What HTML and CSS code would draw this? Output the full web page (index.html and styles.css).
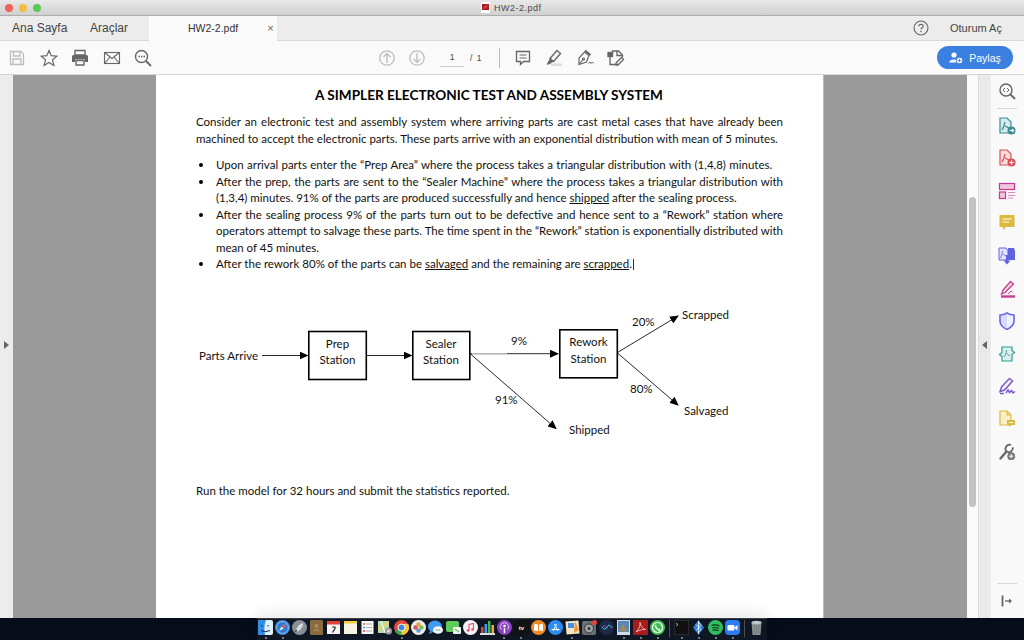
FILE: index.html
```html
<!DOCTYPE html>
<html lang="en">

<head>
    <meta charset="UTF-8">
    <meta name="viewport" content="width=device-width, initial-scale=1.0">
    <title>HW2-2.pdf</title>
    <link rel="stylesheet" href="styles.css">
</head>

<body>
    <div id="window">
        <div class="titlebar">
            <div class="lights"><i class="red"></i><i class="yellow"></i><i class="green"></i></div>
            <div class="doc-title">
                <svg width="9" height="11" viewBox="0 0 9 11"><rect width="9" height="11" fill="#fff"/><rect x="1" y="2" width="7" height="6" fill="#b01c1c"/><path d="M3 6.500 6 3.500" stroke="#f4c8c8" stroke-width=".7"/></svg>
                <span>HW2-2.pdf</span>
            </div>
        </div>

        <div class="tabbar">
            <a class="nav nav-home">Ana Sayfa</a>
            <a class="nav nav-tools">Araçlar</a>
            <div class="tab"><span class="tab-name">HW2-2.pdf</span><span class="tab-close">×</span></div>
            <svg class="help" width="16" height="16" viewBox="0 0 16 16"><circle cx="8" cy="8" r="7" fill="none" stroke="#666" stroke-width="1.100"/><path d="M5.800 6.300C5.800 3.700 10.200 3.700 10.200 6.200 10.200 7.800 8 7.800 8 9.600" fill="none" stroke="#666" stroke-width="1.100"/><circle cx="8" cy="11.500" r=".8" fill="#666"/></svg>
            <a class="signin">Oturum Aç</a>
        </div>

        <div class="toolbar">
            <div class="tools tools-left">
                <svg width="20" height="20" viewBox="0 0 20 20" fill="none" stroke="#bdbdbd" stroke-width="1.300"><path d="M3.500 3.500H14L16.500 6V16.500H3.500Z"/><path d="M6.500 3.500V8H13V3.500M6 16.500V11H14V16.500"/></svg>
                <svg width="20" height="20" viewBox="0 0 20 20" fill="none" stroke="#666" stroke-width="1.200"><path d="M10 2.500 12.200 7.700 17.800 8.200 13.500 11.900 14.900 17.400 10 14.500 5.100 17.400 6.500 11.900 2.200 8.200 7.800 7.700Z"/></svg>
                <svg width="20" height="20" viewBox="0 0 20 20"><path d="M5 2.500H15V7H5Z" fill="none" stroke="#666" stroke-width="1.400"/><path d="M3.500 7H16.500A1.500 1.500 0 0 1 18 8.500V14H15V11.500H5V14H2V8.500A1.500 1.500 0 0 1 3.500 7Z" fill="#666"/><path d="M6 12.500H14V17H6Z" fill="none" stroke="#666" stroke-width="1.400"/></svg>
                <svg width="20" height="20" viewBox="0 0 20 20" fill="none" stroke="#666" stroke-width="1.100"><rect x="2.500" y="4.500" width="15" height="11"/><path d="M2.500 4.500 10 10.500 17.500 4.500M2.500 15.500 8 9M17.500 15.500 12 9"/></svg>
                <svg width="20" height="20" viewBox="0 0 20 20" fill="none" stroke="#666" stroke-width="1.400"><circle cx="8.500" cy="8.500" r="6"/><path d="M13 13 18 18" stroke-width="1.800"/><path d="M5.500 8.500H7M8 8.500H9.500M10.500 8.500H12"/></svg>
            </div>
            <div class="tools tools-page">
                <svg width="20" height="20" viewBox="0 0 20 20" fill="none" stroke="#bcbcbc" stroke-width="1.300"><circle cx="10" cy="10" r="7.200"/><path d="M10 15V5.500M6.500 9 10 5.500 13.500 9"/></svg>
                <svg width="20" height="20" viewBox="0 0 20 20" fill="none" stroke="#bcbcbc" stroke-width="1.300"><circle cx="10" cy="10" r="7.200"/><path d="M10 5V14.500M6.500 11 10 14.500 13.500 11"/></svg>
                <span class="page-input">1</span>
                <span class="page-total">/ 1</span>
                <span class="sep"></span>
            </div>
            <div class="tools tools-comment">
                <svg width="20" height="20" viewBox="0 0 20 20" fill="none" stroke="#666" stroke-width="1.300"><path d="M3.500 3.500H16.500V13.500H10.500L7.500 16.500V13.500H3.500Z"/><path d="M6.500 7H13.500M6.500 10H13.500" stroke-width="1"/></svg>
                <svg width="20" height="20" viewBox="0 0 20 20"><path d="M13 2.500 16.500 5.500 9.500 13.500 6 10.500Z" fill="none" stroke="#666" stroke-width="1.400"/><path d="M6 10.500 2.500 16.500 5 16.500 9.500 13.500Z" fill="#666"/><rect x="7" y="15.500" width="11" height="2.500" fill="#ddd"/></svg>
                <svg width="20" height="20" viewBox="0 0 20 20" fill="none" stroke="#666" stroke-width="1.200"><path d="M9.500 4 14 7.500 11.500 14 4 16.500 4 10Z"/><path d="M4 16.500 8 11.500"/><circle cx="8.500" cy="11" r="1"/><path d="M10 2.500 15.500 7" stroke-width="2"/><path d="M13.500 15.500 15 14 16 15.500 17.500 14 18.500 15.500" stroke-width="1"/></svg>
                <svg width="20" height="20" viewBox="0 0 20 20" fill="none" stroke="#666" stroke-width="1.300"><path d="M6.500 6V3H12.500L16.500 7V9.500M4 6V16.500H12"/><rect x="2" y="4.500" width="4.500" height="4" fill="#666"/><path d="M11 3V7.500H16"/><path d="M10 15 15.500 9.500 17.500 11.500 12 17H10Z"/></svg>
            </div>
            <a class="share">
                <svg width="14" height="12" viewBox="0 0 14 12"><circle cx="5" cy="3" r="2.600" fill="#fff"/><path d="M0 10.500C.5 6.500 9.500 6.500 10 10.500Z" fill="#fff"/><circle cx="10.500" cy="8.500" r="3.300" fill="#fff" stroke="#3b7fe0"/><path d="M10.500 6.800V10.200M8.800 8.500H12.200" stroke="#3b7fe0" stroke-width=".9"/></svg>
                <span>Paylaş</span>
            </a>
        </div>

        <div class="main">
            <div class="gutter"><i class="caret caret-right"></i></div>
            <div class="viewer">
                <div class="page">
                    <h1>A SIMPLER ELECTRONIC TEST AND ASSEMBLY SYSTEM</h1>
                    <p class="intro">
                        <span class="ln fit">Consider an electronic test and assembly system where arriving parts are cast metal cases that have already been</span>
                        <span class="ln">machined to accept the electronic parts. These parts arrive with an exponential distribution with mean of 5 minutes.</span>
                    </p>
                    <ul class="steps">
                        <li><span class="ln wide">Upon arrival parts enter the “Prep Area” where the process takes a triangular distribution with (1,4,8) minutes.</span></li>
                        <li><span class="ln fit">After the prep, the parts are sent to the “Sealer Machine” where the process takes a triangular distribution with</span>
                            <span class="ln">(1,3,4) minutes. 91% of the parts are produced successfully and hence <u>shipped</u> after the sealing process.</span></li>
                        <li><span class="ln fit">After the sealing process 9% of the parts turn out to be defective and hence sent to a “Rework” station where</span>
                            <span class="ln fit">operators attempt to salvage these parts. The time spent in the “Rework” station is exponentially distributed with</span>
                            <span class="ln">mean of 45 minutes.</span></li>
                        <li><span class="ln">After the rework 80% of the parts can be <u>salvaged</u> and the remaining are <u>scrapped</u>.<b class="cursor"></b></span></li>
                    </ul>
                    <svg class="flow" width="560" height="150" viewBox="190 300 560 150">
                        <defs>
                            <marker id="head" markerWidth="9" markerHeight="8" refX="8" refY="4" orient="auto" markerUnits="userSpaceOnUse"><path d="M0 0 9 4 0 8Z" fill="#000"/></marker>
                        </defs>
                        <g fill="#fff" stroke="#000" stroke-width="1.600">
                            <rect x="308.800" y="331.500" width="57.500" height="48"/>
                            <rect x="412.800" y="331.500" width="57" height="48"/>
                            <rect x="559.800" y="329.800" width="57.500" height="48"/>
                        </g>
                        <g stroke="#111" stroke-width=".9" marker-end="url(#head)">
                            <path d="M262 355.500H307.500"/>
                            <path d="M367 355.500H411.500"/>
                            <path d="M470 353.700H558"/>
                            <path d="M470.500 354 556 428.500"/>
                            <path d="M617.500 352.500 678 316"/>
                            <path d="M617.500 353 678 405"/>
                        </g>
                        <path d="M472 353.700H507" stroke="#bbb" stroke-width="1.200"/>
                        <g class="flow-text">
                            <text x="199" y="360">Parts Arrive</text>
                            <text x="337.500" y="348" text-anchor="middle">Prep</text>
                            <text x="337.500" y="364" text-anchor="middle">Station</text>
                            <text x="441" y="348" text-anchor="middle">Sealer</text>
                            <text x="441" y="364" text-anchor="middle">Station</text>
                            <text x="588.500" y="346" text-anchor="middle">Rework</text>
                            <text x="588.500" y="363" text-anchor="middle">Station</text>
                            <text x="511" y="345">9%</text>
                            <text x="632" y="326">20%</text>
                            <text x="630" y="393">80%</text>
                            <text x="495" y="404">91%</text>
                            <text x="682" y="319">Scrapped</text>
                            <text x="684" y="415">Salvaged</text>
                            <text x="569" y="434">Shipped</text>
                        </g>
                    </svg>
                    <p class="run"><span class="ln">Run the model for 32 hours and submit the statistics reported.</span></p>
                </div>
            </div>
            <div class="scroll"><div class="thumb"></div></div>
            <div class="strip"><i class="caret caret-left"></i></div>
            <div class="sidebar">
                <svg width="18" height="18" viewBox="0 0 18 18" fill="none" stroke="#666" stroke-width="1.400"><circle cx="8" cy="8" r="6"/><path d="M12.500 12.500 17 17" stroke-width="1.800"/><path d="M7 6 5 8 7 10M9 6 11 8 9 10" stroke-width="1"/></svg>
                <span class="side-line"></span>
                <svg width="18" height="18" viewBox="0 0 18 18" fill="none" stroke="#3b8a94" stroke-width="1.200"><path d="M2 1H9L13 5V16H2Z" fill="#d5ebec"/><path d="M7 5C6 9 5.500 11 4 13M7 9 11 11"/><circle cx="13.500" cy="13.500" r="4" fill="#3b8a94" stroke="none"/><path d="M11.500 13.500H15.500M14 12 15.500 13.500 14 15" stroke="#fff"/></svg>
                <svg width="18" height="18" viewBox="0 0 18 18" fill="none" stroke="#d8505a" stroke-width="1.200"><path d="M2 1H9L13 5V16H2Z" fill="#f9dcdc"/><path d="M7 5C6 9 5.500 11 4 13M7 9 11 11"/><circle cx="13.500" cy="13.500" r="4" fill="#d8505a" stroke="none"/><path d="M11.300 13.500H15.700M13.500 11.300V15.700" stroke="#fff"/></svg>
                <svg width="18" height="18" viewBox="0 0 18 18"><rect x="1.500" y="1.500" width="15" height="6" fill="#f0c6de" stroke="#c9398f" stroke-width="1.200"/><rect x="1.500" y="10" width="6" height="6.500" fill="#f0c6de" stroke="#c9398f" stroke-width="1.200"/><path d="M10 10.500H17M10 13.500H17M10 16H15" stroke="#e089bb"/></svg>
                <svg width="18" height="18" viewBox="0 0 18 18"><path d="M1.500 1.500Q1.500 1 2 1H16Q16.500 1 16.500 2V12.500Q16.500 13 16 13H8L5 16.500V13H2Q1.500 13 1.500 12.500Z" fill="#dcb93f"/><path d="M4.500 5H13.500M4.500 8H11" stroke="#fff" stroke-width="1.200"/></svg>
                <svg width="18" height="18" viewBox="0 0 18 18"><path d="M1 1H8L10 4V13H1Z" fill="#e3e4fb" stroke="#5f63e0"/><path d="M10 1H16L17 4V13H10Z" fill="#5f63e0"/><path d="M4.500 4C4 7 3.500 9 2.500 11M4.500 7 8 9" fill="none" stroke="#5f63e0" stroke-width=".8"/><path d="M9 8V15" stroke="#5f63e0" stroke-width="2"/><path d="M5.500 13.500H12.500L9 17.500Z" fill="#5f63e0"/></svg>
                <svg width="18" height="18" viewBox="0 0 18 18" fill="none" stroke="#c63f8e" stroke-width="1.300"><path d="M12.500 1.500 15.500 4 7 12.500 3.500 14 5 10Z" fill="#f3d2e5"/><path d="M3 16.500H17" stroke-width="2.400"/><path d="M10 14 13 11 14.500 12.500" stroke-width="1"/></svg>
                <svg width="18" height="18" viewBox="0 0 18 18"><path d="M9 1C11 2.500 13.500 3 16 3V9C16 13 13 15.500 9 17.500 5 15.500 2 13 2 9V3C4.500 3 7 2.500 9 1Z" fill="#eef0fd" stroke="#6468e6" stroke-width="1.600"/><path d="M9 2V16.500C5.500 15 3 12.500 3 9V4C5.500 4 7 3.500 9 2Z" fill="#d7daf9"/></svg>
                <svg width="18" height="18" viewBox="0 0 18 18" fill="none" stroke="#2f9b96" stroke-width="1.200"><path d="M4 2H14V5.500L16.500 7.500 14 9.500V16H4V11.500L1.500 9.500 4 7.500Z" fill="#dcefee"/><path d="M8.500 5C8.300 8 7.500 10 6 12M8.800 8.500 12 11" stroke-width=".9"/></svg>
                <svg width="18" height="18" viewBox="0 0 18 18" fill="none" stroke="#8159cf" stroke-width="1.500"><path d="M11.500 1.500 14.500 4 6.500 13 2 14.500 3.500 10Z"/><path d="M2 16.500H6M8 16 10 13 11.500 15.500 13.500 13.500 15 16 17 14.500"/></svg>
                <svg width="18" height="18" viewBox="0 0 18 18"><path d="M2 1H9L13 5V15H2Z" fill="#f9efc8" stroke="#dcb93f" stroke-width="1.200"/><path d="M9 1V5H13" fill="none" stroke="#dcb93f" stroke-width="1.200"/><path d="M9 10H17V15H13L11 17V15H9Z" fill="#dcb93f"/><path d="M11 12.500H15" stroke="#fff"/></svg>
                <svg width="18" height="18" viewBox="0 0 18 18" fill="none" stroke="#666"><path d="M2.500 15.500 8.500 8.500" stroke-width="2.400" stroke-linecap="round"/><path d="M13 1.800A4.200 4.200 0 0 0 8.500 8.500 4.200 4.200 0 0 0 14.800 4.300" stroke-width="1.800"/><circle cx="13.200" cy="13.200" r="3.900" fill="#777" stroke="none"/><path d="M11 13.200H15.400M13.200 11V15.400" stroke="#fff"/></svg>
                <svg class="collapse-btn" width="16" height="16" viewBox="0 0 16 16"><path d="M3.500 2.500V13.500" stroke="#666" stroke-width="1.800" fill="none"/><path d="M6 8H11" stroke="#666" stroke-width="1.300"/><path d="M10 5.500 13 8 10 10.500Z" fill="#666"/></svg>
                <span class="side-line side-line-low"></span>
            </div>
        </div>
    </div>

    <div class="desktop">
        <div class="dock">
            <span class="app on"><svg viewBox="0 0 15 15"><rect width="15" height="15" rx="2" fill="#dff0fb"/><path d="M0 2Q0 0 2 0H8C6 5 6 10 7 15H2Q0 15 0 13Z" fill="#2f8fe8"/><path d="M4 5V6.500M10 5V6.500M3 10.500Q7 13 12 10.500" stroke="#123" fill="none"/></svg></span>
            <span class="app on"><svg viewBox="0 0 15 15"><circle cx="7.500" cy="7.500" r="7.500" fill="#3b8fe4"/><circle cx="7.500" cy="7.500" r="5.800" fill="#2d7ad0" stroke="#cfe4f7" stroke-width=".5"/><path d="M11 4 6.500 6.500 4 11 8.500 8.500Z" fill="#f2f2f2"/><path d="M11 4 6.500 6.500 8.500 8.500Z" fill="#e8413a"/></svg></span>
            <span class="app"><svg viewBox="0 0 15 15"><circle cx="7.500" cy="7.500" r="7.500" fill="#8a8f96"/><path d="M11 3C7 4 5 7 4 10L5.500 11.500C8.500 10 11 8 11 3Z" fill="#d8dadd"/><path d="M3 12 5 10" stroke="#333"/></svg></span>
            <span class="app"><svg viewBox="0 0 15 15"><rect x="1" width="13" height="15" rx="1" fill="#8a6a3f"/><circle cx="7.500" cy="6" r="2" fill="#a88a5e"/><path d="M4 11Q7.500 7.500 11 11Z" fill="#a88a5e"/></svg></span>
            <span class="app"><svg viewBox="0 0 15 15"><rect x="1" y="1" width="13" height="13" fill="#f4f4f4"/><rect x="1" y="1" width="13" height="3.500" fill="#e0413a"/><path d="M6 7H9V8.500L6.500 12.500" fill="none" stroke="#222" stroke-width="1.200"/></svg></span>
            <span class="app"><svg viewBox="0 0 15 15"><rect x="1" y="1" width="13" height="13" fill="#f6f3e2"/><rect x="1" y="1" width="13" height="2.500" fill="#f0cf43"/></svg></span>
            <span class="app"><svg viewBox="0 0 15 15"><rect x="1.500" y="1" width="12" height="13" fill="#f8f8f8"/><circle cx="4" cy="4" r="1" fill="#e8623a"/><circle cx="4" cy="7.500" r="1" fill="#3b8fe4"/><circle cx="4" cy="11" r="1" fill="#e8413a"/><path d="M6 4H12M6 7.500H12M6 11H12" stroke="#999" stroke-width=".8"/></svg></span>
            <span class="app"><svg viewBox="0 0 15 15"><rect x="1" y="1" width="11" height="12" fill="#bcd9a6"/><path d="M1 9 12 2" stroke="#f2cf5c" stroke-width="1.500"/><path d="M4 1 8 13" stroke="#fff"/><circle cx="11.500" cy="11" r="3.500" fill="#9a9a9a"/><circle cx="11.500" cy="11" r="1.600" fill="#ddd"/></svg></span>
            <span class="app on"><svg viewBox="0 0 15 15"><circle cx="7.500" cy="7.500" r="7.500" fill="#e5453a"/><path d="M7.500 7.500 1 11.200A7.500 7.500 0 0 0 7.500 15L11 8.500Z" fill="#3aa757"/><path d="M7.500 4H14.200A7.500 7.500 0 0 1 7.500 15Z" fill="#f7c62f"/><circle cx="7.500" cy="7.500" r="3.500" fill="#3f83e8" stroke="#fff"/></svg></span>
            <span class="app"><svg viewBox="0 0 15 15"><circle cx="7.500" cy="7.500" r="7.500" fill="#ececec"/><circle cx="7.500" cy="4.500" r="2.200" fill="#e8a33a"/><circle cx="10.500" cy="7.500" r="2.200" fill="#7fbf4a"/><circle cx="7.500" cy="10.500" r="2.200" fill="#5a9ae0"/><circle cx="4.500" cy="7.500" r="2.200" fill="#d9534f"/></svg></span>
            <span class="app"><svg viewBox="0 0 15 15"><ellipse cx="7" cy="6.500" rx="7" ry="6" fill="#3f9cf0"/><path d="M2 11 1 14 5 12Z" fill="#3f9cf0"/><ellipse cx="10" cy="10" rx="5" ry="3.800" fill="#f4f6f8"/><path d="M8 10H8.800M9.700 10H10.500M11.400 10H12.200" stroke="#444"/></svg></span>
            <span class="app"><svg viewBox="0 0 15 15"><rect x="0" y="1" width="13" height="11" rx="2" fill="#5ecb5a"/><rect x="7" y="7" width="8" height="7" rx="1" fill="#f2f2f2"/><path d="M9 9 13 12" stroke="#5ecb5a" stroke-width="1.200"/></svg></span>
            <span class="app"><svg viewBox="0 0 15 15"><circle cx="7.500" cy="7.500" r="7.500" fill="#f4f4f6"/><path d="M6 10.500V4.500L10.500 3.500V9.500" fill="none" stroke="#ef4a68" stroke-width="1.100"/><circle cx="5" cy="10.500" r="1.300" fill="#ef4a68"/><circle cx="9.500" cy="9.500" r="1.300" fill="#ef4a68"/></svg></span>
            <span class="app"><svg viewBox="0 0 15 15"><rect y="13" width="15" height="2" fill="#ddd"/><rect x="1" y="7" width="2.500" height="6" fill="#e8413a"/><rect x="4.500" y="4" width="2.500" height="9" fill="#3f9cf0"/><rect x="8" y="1" width="2.500" height="12" fill="#4caf50"/><rect x="11.500" y="5" width="2.500" height="8" fill="#f0a830"/></svg></span>
            <span class="app on"><svg viewBox="0 0 15 15"><circle cx="7.500" cy="7.500" r="7.500" fill="#8f3fc4"/><circle cx="7.500" cy="6" r="1.300" fill="#fff"/><path d="M7.500 8V13" stroke="#fff" stroke-width="1.500"/><path d="M4.300 9.500A4.200 4.200 0 1 1 10.700 9.500" fill="none" stroke="#e6cff5"/></svg></span>
            <span class="app on"><svg viewBox="0 0 15 15"><rect width="15" height="15" rx="3" fill="#111"/><text x="7.500" y="9.800" class="tv-label" text-anchor="middle">tv</text></svg></span>
            <span class="app"><svg viewBox="0 0 15 15"><circle cx="7.500" cy="7.500" r="7.500" fill="#f08a24"/><path d="M3 4.500Q5.500 3.500 7 5V11.500Q5.500 10 3 11ZM12 4.500Q9.500 3.500 8 5V11.500Q9.500 10 12 11Z" fill="#fff"/></svg></span>
            <span class="app"><svg viewBox="0 0 15 15"><circle cx="7.500" cy="7.500" r="7.500" fill="#2c8df0"/><path d="M5 11 8.500 4M10 11 6.500 4M3.500 9.500H11.500" stroke="#fff" fill="none"/></svg></span>
            <span class="app on"><svg viewBox="0 0 15 15"><rect x="1" y="1" width="13" height="13" fill="#f3e6c8" transform="rotate(-5 7.500 7.500)"/><rect x="3" y="3" width="6" height="5" fill="#4a8fd8"/><path d="M10 1 14 10 9 13" fill="#f09a3a"/></svg></span>
            <span class="app"><svg viewBox="0 0 15 15"><rect width="14" height="14" y="1" rx="2" fill="#6b6f73"/><circle cx="7" cy="8.500" r="4.500" fill="#a0a4a8" stroke="#333"/><circle cx="7" cy="8.500" r="1.500" fill="#333"/><circle cx="12.500" cy="2.500" r="2.500" fill="#e8413a"/></svg></span>
            <span class="app"><svg viewBox="0 0 15 15"><circle cx="7.500" cy="7.500" r="7.500" fill="#1c2a4a"/><path d="M2 8Q5 3 7.500 7.500T13 7Q10 12 7.500 8T2 8Z" fill="#d94ab8"/><path d="M3 7Q6 11 8 7T13 8" stroke="#4ad0e8" fill="none"/></svg></span>
            <span class="app on"><svg viewBox="0 0 15 15"><rect x="1" width="13" height="15" fill="#cfdcea"/><rect x="2" y="1" width="11" height="11" fill="#5f87b4"/><path d="M3 11 7 4 11 11Z" fill="#a38a5c"/></svg></span>
            <span class="app on"><svg viewBox="0 0 15 15"><rect width="15" height="15" fill="#a81c1c"/><path d="M3 12C6 9 7.500 6 7 2.500 7.500 6 9.500 8.500 12.500 9.500 9 9.500 6 10 3 12Z" fill="none" stroke="#f4d6d6" stroke-width=".8"/></svg></span>
            <span class="app on"><svg viewBox="0 0 15 15"><circle cx="7.500" cy="7.500" r="7.500" fill="#3ec14e"/><circle cx="7.500" cy="7.500" r="5" fill="none" stroke="#fff" stroke-width="1.200"/><path d="M5.500 5C5.500 8 7 9.500 10 10" stroke="#fff" stroke-width="1.400" fill="none"/></svg></span>
            <span class="dock-sep"></span>
            <span class="app on"><svg viewBox="0 0 15 15"><rect width="15" height="15" rx="1" fill="#111" stroke="#666" stroke-width=".6"/><path d="M2 3 4 4.500 2 6" stroke="#ddd" fill="none" stroke-width=".7"/></svg></span>
            <span class="app on"><svg viewBox="0 0 15 15"><path d="M7.500 0 13 7.500 7.500 15 2 7.500Z" fill="#2e7fd8"/><path d="M7.500 1V14M5 4.500 10 9.500 7.500 12M5 10.500 10 5.500 7.500 2" stroke="#fff" fill="none" stroke-width=".8"/></svg></span>
            <span class="app on"><svg viewBox="0 0 15 15"><circle cx="7.500" cy="7.500" r="7.500" fill="#2fbf5f"/><path d="M3.500 5.500Q7.500 4 11.500 6M4 8Q7.500 6.800 11 8.500M4.500 10.300Q7.500 9.300 10.500 10.800" stroke="#14301d" fill="none" stroke-width="1.100"/></svg></span>
            <span class="app on"><svg viewBox="0 0 15 15"><rect width="15" height="15" rx="4" fill="#2d7cf0"/><rect x="2.500" y="5" width="7" height="5.500" rx="1.200" fill="#fff"/><path d="M10 7 12.500 5V10.500L10 8.500Z" fill="#fff"/></svg></span>
            <span class="dock-sep"></span>
            <span class="app"><svg viewBox="0 0 15 15"><path d="M2.500 2H12.500L11.500 15H3.500Z" fill="#8c9094"/><ellipse cx="7.500" cy="2.500" rx="5" ry="1.800" fill="#c4c7ca"/><path d="M5 5 5.500 14M7.500 5V14M10 5 9.500 14" stroke="#6a6e72" stroke-width=".6"/></svg></span>
        </div>
    </div>
</body>

</html>
```

FILE: styles.css
```css
* {
    margin: 0;
    padding: 0;
    box-sizing: border-box;
}

body {
    width: 1024px;
    height: 640px;
    overflow: hidden;
    background: #060d18;
    font-family: "Liberation Sans", Arial, sans-serif;
}

#window {
    height: 618px;
    display: flex;
    flex-direction: column;
    background: #ececec;
}

/* title bar */
.titlebar {
    height: 16px;
    flex: none;
    display: flex;
    align-items: center;
    background: linear-gradient(#e8e8e8, #d0d0d0);
    border-bottom: 1px solid #adadad;
}

.lights {
    width: 481px;
    padding-left: 5px;
    display: flex;
    gap: 6px;
}

.lights i {
    width: 8px;
    height: 8px;
    border-radius: 50%;
}

.red { background: #f4605a; }
.yellow { background: #f5bd3f; }
.green { background: #5bc84f; }

.doc-title {
    display: flex;
    align-items: center;
    gap: 4px;
    font-size: 9px;
    letter-spacing: .5px;
    color: #4a4a4a;
}

/* tabs */
.tabbar {
    height: 25px;
    flex: none;
    display: flex;
    align-items: center;
    background: #ececec;
    border-bottom: 1px solid #d8d8d8;
    color: #444;
    font-size: 12px;
}

.nav-home { margin-left: 12px; width: 78px; }
.nav-tools { width: 59px; }

.tab {
    width: 128px;
    height: 25px;
    display: flex;
    align-items: center;
    background: #fafafa;
    font-size: 10.500px;
    color: #333;
}

.tab-name { margin-left: 39px; }
.tab-close { margin-left: 29px; font-size: 11px; color: #666; }

.help { margin-left: 636px; }
.signin { margin-left: 21px; font-size: 11px; }

/* toolbar */
.toolbar {
    height: 34px;
    flex: none;
    display: flex;
    align-items: center;
    background: #fafafa;
    border-bottom: 1px solid #d4d4d4;
}

.tools {
    display: flex;
    align-items: center;
    flex: none;
}

.tools-left { margin-left: 7px; gap: 11.500px; }
.tools-page { margin-left: 224px; gap: 10px; }
.tools-comment { margin-left: 13px; gap: 11px; }

.page-input {
    width: 24px;
    height: 18px;
    margin-left: 3px;
    text-align: center;
    font-size: 8.500px;
    line-height: 16px;
    color: #444;
    border-bottom: 1px solid #ccc;
}

.page-total {
    margin-left: -4px;
    width: 14px;
    font-size: 8.500px;
    color: #444;
    letter-spacing: 1px;
    white-space: nowrap;
}

.sep {
    width: 1px;
    height: 20px;
    margin-left: 5px;
    background: #bbb;
}

.share {
    width: 76px;
    height: 23px;
    margin-left: 311px;
    display: flex;
    align-items: center;
    justify-content: center;
    gap: 6px;
    border-radius: 12px;
    background: #3b7fe0;
    color: #fff;
    font-size: 10.500px;
}

/* document area */
.main {
    flex: 1;
    min-height: 0;
    display: flex;
}

.gutter {
    width: 13px;
    flex: none;
    display: flex;
    align-items: center;
    padding-left: 4px;
    padding-bottom: 3px;
    background: #ececec;
}

.caret {
    width: 0;
    height: 0;
    border-top: 4px solid transparent;
    border-bottom: 4px solid transparent;
}

.caret-right { border-left: 5px solid #666; }
.caret-left { border-right: 5px solid #666; }

.viewer {
    width: 954px;
    flex: none;
    display: flex;
    justify-content: center;
    overflow: hidden;
    background: #9a9a9a;
}

.page {
    width: 668px;
    height: 543px;
    flex: none;
    padding: 12px 40px 0;
    background: #fff;
    border-right: 1px solid #bbb;
    font-family: Lato, "Liberation Sans", sans-serif;
    font-size: 11.500px;
    line-height: 16.500px;
    color: #111;
}

.page h1 {
    font-size: 13.600px;
    line-height: 17px;
    font-weight: 700;
    text-align: center;
    color: #000;
    margin-right: 1px;
}

.ln {
    display: block;
    white-space: nowrap;
}

.ln.fit {
    white-space: normal;
    text-align: justify;
    text-align-last: justify;
}

.ln.wide {
    word-spacing: .4px;
}

.intro {
    margin-top: 10px;
    width: 587px;
}

.steps {
    margin-top: 10px;
    width: 587px;
    padding-left: 20px;
    list-style: none;
}

.steps li {
    position: relative;
}

/* round bullet hanging left of the text */
.steps li::before {
    content: "";
    position: absolute;
    left: -17.500px;
    top: 6px;
    width: 4px;
    height: 4px;
    border-radius: 50%;
    background: #000;
}

.cursor {
    display: inline-block;
    width: 1px;
    height: 11px;
    margin-left: 1px;
    vertical-align: -2px;
    background: #333;
}

.flow {
    display: block;
    margin-top: 27px;
    margin-left: -6px;
}

.flow-text text {
    font-family: Lato, "Liberation Sans", sans-serif;
    font-size: 11.500px;
    fill: #111;
}

.run {
    margin-top: 33px;
}

/* right side */
.scroll {
    width: 11px;
    flex: none;
    padding: 122px 2px 0;
    background: #fafafa;
}

.thumb {
    width: 7px;
    height: 310px;
    border-radius: 4px;
    background: #c2c2c2;
}

.strip {
    width: 12px;
    flex: none;
    display: flex;
    align-items: center;
    padding-left: 3px;
    padding-bottom: 3px;
    background: #e9e9e9;
    border-left: 1px solid #dcdcdc;
}

.sidebar {
    width: 34px;
    flex: none;
    display: flex;
    flex-direction: column;
    align-items: center;
    padding: 7px 2px 0 0;
    background: #f9f9f9;
    border-left: 1px solid #ececec;
}

.sidebar svg {
    flex: none;
    margin-bottom: 14.600px;
}

.side-line {
    width: 20px;
    height: 1px;
    flex: none;
    margin: -7px 0 8px;
    background: #d8d8d8;
}

.sidebar .collapse-btn {
    order: 2;
    margin-bottom: 9px;
}

.side-line-low {
    margin: auto 0 9px;
    order: 1;
}

/* dock */
.desktop {
    position: relative;
    height: 22px;
    background: #060d18;
}

.dock {
    width: 510px;
    height: 22px;
    margin-left: 257px;
    display: flex;
    background: #0f1724;
    border-top: 1px solid #3a3f47;
    box-shadow: 0 -6px 14px rgba(0, 0, 0, .08);
    overflow: hidden;
}

.app {
    width: 17.050px;
    flex: none;
    display: flex;
    flex-direction: column;
    align-items: center;
}

.app svg {
    width: 15px;
    height: 15px;
    margin-top: 1px;
    flex: none;
}

.app.on::after {
    content: "";
    width: 2px;
    height: 2px;
    margin-top: 2px;
    border-radius: 50%;
    background: #9aa0a8;
}

.tv-label {
    font-family: "Liberation Sans", sans-serif;
    font-size: 6px;
    font-weight: 700;
    fill: #fff;
}

.dock-sep {
    width: 1px;
    height: 17px;
    flex: none;
    margin: 1px 3px 0;
    background: #4a4f58;
}
```
